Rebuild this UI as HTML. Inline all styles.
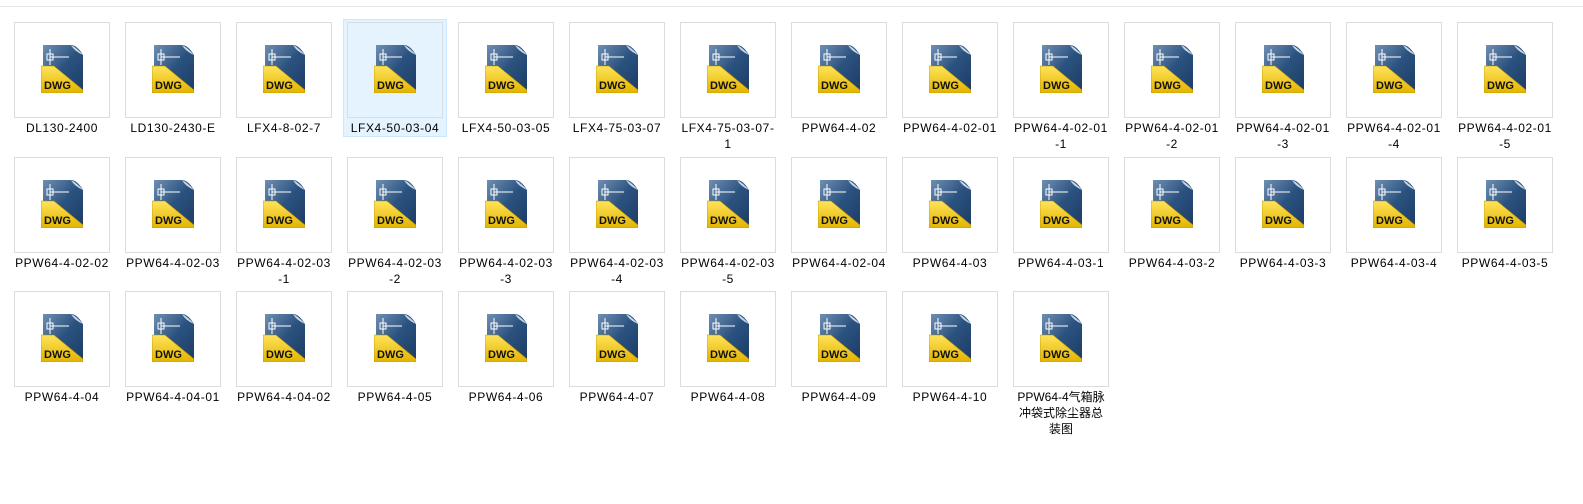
<!DOCTYPE html>
<html><head><meta charset="utf-8"><style>
body{margin:0;width:1583px;height:504px;background:#fff;position:relative;overflow:hidden;font-family:"Liberation Sans","Noto Sans CJK SC",sans-serif;}
.top{position:absolute;left:0;top:6px;width:1583px;height:1px;background:#e5e5e5}
.it{position:absolute;width:102px}
.it.sel{background:#e5f3ff;outline:1px solid #cce8ff}
.box{position:absolute;left:3px;top:2px;width:94px;height:94px;border:1px solid #dcdcdc;background:#fff}
.sel .box{border-color:#d5dee6;background:transparent}
.box svg{position:absolute;left:26px;top:22px}
.lb{position:absolute;left:-10px;top:100px;width:122px;text-align:center;font-size:12px;letter-spacing:0.6px;line-height:16px;color:#000;white-space:nowrap}
</style></head><body>
<div class="top"></div>
<svg width="0" height="0" style="position:absolute"><defs>
<linearGradient id="bg" x1="0" y1="0" x2="1" y2="1"><stop offset="0" stop-color="#6f8fb3"/><stop offset=".5" stop-color="#2b527f"/><stop offset="1" stop-color="#1c3c66"/></linearGradient>
<linearGradient id="yg" x1="0" y1="0" x2="0" y2="1"><stop offset="0" stop-color="#ffe35a"/><stop offset="1" stop-color="#e2b400"/></linearGradient>
<g id="ic">
<path d="M2 0H30Q36 0 42 10V46H2Z" fill="url(#bg)"/>
<path d="M30 0Q33 6 42 10Q36 3 30 0Z" fill="#c9d6e4"/>
<path d="M9 12H28M9 4V20" stroke="#fff" stroke-width="1"/>
<rect x="6" y="9" width="6" height="6" fill="none" stroke="#fff" stroke-width="1"/>
<path d="M0 21H13L42 45V48H0Z" fill="url(#yg)" stroke="#b58f00" stroke-width=".6"/>
<text x="3" y="44" font-family="Liberation Sans" font-weight="bold" font-size="11" fill="#111">DWG</text>
</g></defs></svg>
<div id="c"></div>
<script>
var n=["DL130-2400","LD130-2430-E","LFX4-8-02-7","LFX4-50-03-04","LFX4-50-03-05","LFX4-75-03-07","LFX4-75-03-07-<br>1","PPW64-4-02","PPW64-4-02-01","PPW64-4-02-01<br>-1","PPW64-4-02-01<br>-2","PPW64-4-02-01<br>-3","PPW64-4-02-01<br>-4","PPW64-4-02-01<br>-5",
"PPW64-4-02-02","PPW64-4-02-03","PPW64-4-02-03<br>-1","PPW64-4-02-03<br>-2","PPW64-4-02-03<br>-3","PPW64-4-02-03<br>-4","PPW64-4-02-03<br>-5","PPW64-4-02-04","PPW64-4-03","PPW64-4-03-1","PPW64-4-03-2","PPW64-4-03-3","PPW64-4-03-4","PPW64-4-03-5",
"PPW64-4-04","PPW64-4-04-01","PPW64-4-04-02","PPW64-4-05","PPW64-4-06","PPW64-4-07","PPW64-4-08","PPW64-4-09","PPW64-4-10","<span style='letter-spacing:0'>PPW64-4气箱脉<br>冲袋式除尘器总<br>装图</span>"];
var h="";
for(var i=0;i<n.length;i++){var r=Math.floor(i/14),c=i%14;var x=11+c*111,y=20+r*134.5;
h+='<div class="it'+(i==3?' sel':'')+'" style="left:'+x+'px;top:'+y+'px;height:'+(i==3?116:0)+'px"><div class="box"><svg width="42" height="48"><use href="#ic"/></svg></div><div class="lb">'+n[i]+'</div></div>';}
document.getElementById("c").innerHTML=h;
</script>
</body></html>
